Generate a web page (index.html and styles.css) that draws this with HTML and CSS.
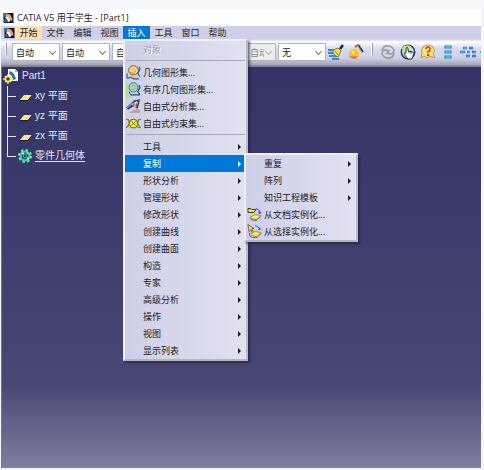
FILE: index.html
```html
<!DOCTYPE html>
<html lang="zh-CN">
<head>
<meta charset="utf-8">
<title>CATIA V5 用于学生 - [Part1]</title>
<link rel="stylesheet" href="styles.css">
</head>
<body>
<svg class="defs" aria-hidden="true">
  <symbol id="logo" viewBox="0 0 12 12">
    <rect width="12" height="12" fill="#10142c"/>
    <path d="M0 0h5L1 5H0z" fill="#2c6fb0"/>
    <path d="M4 1c5 0 6 4 7 8L8 9C8 6 6 4 2 4z" fill="#f2a25c"/>
    <path d="M3 4c3 0 5 2 5 6l-3 1C5 8 4 7 2 6z" fill="#fff3df"/>
    <path d="M1 7c3 0 3 2 3 4H1z" fill="#2d6ca8"/>
  </symbol>
  <symbol id="plane" viewBox="0 0 14 8">
    <path d="M5 1h8L9 6H1z" fill="#ffe680"/>
    <path d="M1 6h8l4-5v1L9 7H1z" fill="#1c1c30"/>
  </symbol>
  <symbol id="geoset" viewBox="0 0 14 14">
    <ellipse cx="7" cy="5" rx="4.6" ry="4.2" fill="#ffd98a" stroke="#6b4a14" stroke-width=".8"/>
    <path d="M4 4q1-2 3 0t3-1" fill="none" stroke="#e8a04f" stroke-width=".8"/>
    <path d="M4 7q3 2 5-1" fill="none" stroke="#d8603f" stroke-width=".8"/>
    <path d="M1 8v4q2 1 3-1l3 2h5M12 2q2 1 0 4l-1 2 2 3" fill="none" stroke="#1f5e96" stroke-width="1.1"/>
    <path d="M4 10l3 1h4" stroke="#f0c060" fill="none"/>
  </symbol>
  <symbol id="ordset" viewBox="0 0 14 14">
    <path d="M1 1v12h3" fill="none" stroke="#8fff1a" stroke-width="1.4"/>
    <ellipse cx="7" cy="5" rx="4.2" ry="4.4" fill="#a6d8b0" stroke="#2f6a72" stroke-width=".8"/>
    <path d="M5 4q2-1 4 0M5 7q2 1 4-1" fill="none" stroke="#7fbf8a" stroke-width=".8"/>
    <path d="M3 9q1 4 4 3h6M12 3q2 2 0 4l-1 2 2 3" fill="none" stroke="#1f4e86" stroke-width="1.1"/>
  </symbol>
  <symbol id="analysis" viewBox="0 0 14 14">
    <path d="M4 12l6-3 3 1v3H3z" fill="#aaa"/>
    <path d="M0 8l8-7 5 0-2 8-4-2-5 3z" fill="#24506e"/>
    <path d="M5 5l5-3 1 2-2 4z" fill="#fff"/>
    <path d="M6 7l2-3M9 7l1-3M11 1l2-1" stroke="#d83a2e" stroke-width="1.4"/>
    <path d="M1 8l5-4" stroke="#60c5d8"/>
  </symbol>
  <symbol id="constraint" viewBox="0 0 14 14">
    <path d="M4 4l3-1 3 1 1 4-2 3H5L3 8z" fill="#f6ee3c" stroke="#5c5800" stroke-width=".9"/>
    <path d="M0 3l3 1M0 11l3-2M14 3l-3 1M14 11l-4-1M2 3l1 4-2 3M12 3l-1 4 2 3M5 5l4 4M9 5L5 9" fill="none" stroke="#77700a" stroke-width=".9"/>
  </symbol>
  <symbol id="docinst" viewBox="0 0 15 14">
    <path d="M1 1h3l1 1h4L7 5H1z" fill="#e5df55" stroke="#33330a" stroke-width=".9"/>
    <path d="M9 1q4 1 4 5M13 6l-2-1M13 6l1-2" fill="none" stroke="#3344ee" stroke-width=".9"/>
    <path d="M3 10l5-3 6 1-4 4-6-1z" fill="#fff02c" stroke="#7d7730" stroke-width=".7"/>
    <path d="M3 11q1 2 6 2l5-4" fill="none" stroke="#3c48bb" stroke-width=".8"/>
  </symbol>
  <symbol id="selinst" viewBox="0 0 15 14">
    <path d="M1 0l1 7 2-2 1 3 1-1-1-3h2z" fill="#f8d790" stroke="#443c20" stroke-width=".7"/>
    <path d="M8 1q4 1 5 4M13 5l-2 0M13 5l0-2" fill="none" stroke="#3344ee" stroke-width=".9"/>
    <path d="M4 9l4-2 6 1-4 4-6-1z" fill="#fff02c" stroke="#7d7730" stroke-width=".7"/>
    <path d="M2 8q0 4 3 5h5l4-4" fill="none" stroke="#3c48bb" stroke-width=".8"/>
  </symbol>
</svg>

<main class="window">
  <header class="titlebar">
    <svg class="logo"><use href="#logo"/></svg>
    <h1>CATIA V5 用于学生 - [Part1]</h1>
  </header>

  <nav class="menubar">
    <svg class="logo"><use href="#logo"/></svg>
    <button class="start">开始</button>
    <button>文件</button>
    <button>编辑</button>
    <button>视图</button>
    <div class="dropdown">
      <button class="open">插入</button>
      <div class="menu insert">
        <button class="item" disabled>对象</button>
        <hr>
        <button class="item"><svg><use href="#geoset"/></svg>几何图形集...</button>
        <button class="item"><svg><use href="#ordset"/></svg>有序几何图形集...</button>
        <button class="item"><svg><use href="#analysis"/></svg>自由式分析集...</button>
        <button class="item"><svg><use href="#constraint"/></svg>自由式约束集...</button>
        <hr>
        <button class="item more">工具</button>
        <div class="branch">
          <button class="item more current">复制</button>
          <div class="menu copy">
            <button class="item more">重复</button>
            <button class="item more">阵列</button>
            <button class="item more">知识工程模板</button>
            <button class="item"><svg><use href="#docinst"/></svg>从文档实例化...</button>
            <button class="item"><svg><use href="#selinst"/></svg>从选择实例化...</button>
          </div>
        </div>
        <button class="item more">形状分析</button>
        <button class="item more">管理形状</button>
        <button class="item more">修改形状</button>
        <button class="item more">创建曲线</button>
        <button class="item more">创建曲面</button>
        <button class="item more">构造</button>
        <button class="item more">专家</button>
        <button class="item more">高级分析</button>
        <button class="item more">操作</button>
        <button class="item more">视图</button>
        <button class="item more">显示列表</button>
      </div>
    </div>
    <button>工具</button>
    <button>窗口</button>
    <button>帮助</button>
  </nav>

  <div class="toolbar">
    <span class="grip"></span>
    <label class="combo"><select aria-label="颜色"><option>自动</option></select></label>
    <label class="combo"><select aria-label="透明度"><option>自动</option></select></label>
    <label class="combo wide"><select aria-label="线宽"><option>自动</option></select></label>
    <label class="combo off"><select aria-label="点符号" disabled><option>自动</option></select></label>
    <label class="combo"><select aria-label="图层"><option>无</option></select></label>
    <div class="tools">
      <button aria-label="格式刷"><svg viewBox="0 0 16 16">
        <path d="M0 6h8M0 9h8M1 12h9M4 15h7" stroke="#2b86ee" stroke-width="1.8"/>
        <path d="M5 6l5-2 3 3-3 6q-2 0-5-4z" fill="#eee05c" stroke="#6b6420" stroke-width=".8"/>
        <path d="M7 7l3 4" stroke="#6b6420" stroke-width=".7"/>
        <path d="M12 5l3-4" stroke="#18255c" stroke-width="2.6"/></svg></button>
      <button aria-label="图形属性"><svg viewBox="0 0 16 16">
        <circle cx="6" cy="10" r="5" fill="#f9c51e"/><path d="M1 12q5 6 9 0-4 1-9 0" fill="#e552b8"/><circle cx="5" cy="8" r="1.5" fill="#fff17a"/>
        <path d="M7 3l3-2 2 1" fill="none" stroke="#c3472f" stroke-width="1.6"/><path d="M11 2l4 6" stroke="#233c88" stroke-width="1.8"/><path d="M10 3l4 6" stroke="#e08a6a"/></svg></button>
      <span class="grip"></span>
      <button aria-label="更新"><svg viewBox="0 0 16 16" fill="none" stroke="#9b9ba3" stroke-width="1.6">
        <path d="M2 7Q3 1 9 2q4 1 5 4 0 4-4 4-3-1-2-3 1-1 2 0"/><path d="M14 9q-1 6-7 5-4-1-5-4 0-4 4-4 3 1 2 3-1 1-2 0"/></svg></button>
      <button aria-label="手动更新"><svg viewBox="0 0 16 16">
        <circle cx="8" cy="8" r="6.7" fill="#c3e3d7" stroke="#173a5c" stroke-width="1.4"/>
        <path d="M2 5q4-5 9-2" fill="none" stroke="#eee45b" stroke-width="1.4"/>
        <path d="M6 4q1-1 2 0v3l5 1q1 1 0 4l-1 3H8L4 10q0-2 2-1z" fill="#fff" stroke="#222" stroke-width=".9"/><path d="M9 7v2M11 8v2" stroke="#222" stroke-width=".8"/></svg></button>
      <button aria-label="这是什么？"><svg viewBox="0 0 16 16">
        <path d="M3 3q5-4 10 0 3 4 0 7l2 4-5-2-3 2-3-2-3 2 1-5q-1-3 1-6z" fill="#ffe174" stroke="#a38e45" stroke-width=".8"/>
        <path d="M6 5q0-2 2-2t2 2-2 3v1" fill="none" stroke="#d93520" stroke-width="1.5"/><path d="M7 10h2v2H7z" fill="#d93520"/></svg></button>
      <button aria-label="目录"><svg viewBox="0 0 16 16" fill="#44e4e4" stroke="#3978ea" stroke-width="1.2">
        <path d="M5 2h6v2H5zM5 7h6v2H5zM5 12h6v2H5z"/><path d="M6 3h4M6 8h4M6 13h4" stroke="#38d7a4"/></svg></button>
      <button aria-label="设计表"><svg viewBox="0 0 16 16" stroke-width="2.4">
        <path d="M3 4h4M9 4h4M0 8h5M7 8h3M12 8h4M6 12h4M12 12h4" stroke="#4674e8"/><path d="M4 4h3M1 8h3M8 8h2M13 9h3M7 13h3" stroke="#44dcbd" stroke-width="1"/></svg></button>
      <span class="cut"></span>
    </div>
  </div>

  <section class="canvas">
    <ul class="tree">
      <li class="root"><svg viewBox="0 0 16 16">
        <path d="M5 1h7l3 3v9H5z" fill="#fff"/><path d="M7 3q4 1 6 8l-3 1Q9 7 6 6z" fill="#247a9e"/><path d="M12 1v3h3z" fill="#8bd3e4"/>
        <circle cx="5" cy="11" r="2.6" fill="#4a431c" stroke="#ffe36a" stroke-width="1.6"/>
        <path d="M5 6v2M5 14v2M0 11h2M8 11h2M2 8l1 1M7 13l1 1M2 14l1-1M7 9l1-1" stroke="#ffe36a" stroke-width="1.4"/></svg>Part1</li>
      <li><svg><use href="#plane"/></svg>xy 平面</li>
      <li><svg><use href="#plane"/></svg>yz 平面</li>
      <li><svg><use href="#plane"/></svg>zx 平面</li>
      <li class="body"><svg viewBox="0 0 14 14">
        <circle cx="7" cy="7" r="4.4" fill="#174f68" stroke="#3bc8c0" stroke-width="2.2"/>
        <circle cx="7" cy="7" r="6" fill="none" stroke="#6fe9a4" stroke-width="2" stroke-dasharray="2.4 2.3"/>
        <circle cx="7" cy="7" r="1.7" fill="#132b48" stroke="#3cbcc8"/><path d="M4 4l2 1M9 9l2 1M9 4l1 1" stroke="#f6ef4c" stroke-width="1.4"/></svg><a href="#body">零件几何体</a></li>
    </ul>
  </section>
</main>
</body>
</html>
```
FILE: styles.css
```css
* {
  box-sizing: border-box;
}

body {
  margin: 0;
  height: 100vh;
  padding: 9px 3px 2px 1px;
  background: #f4f6fa;
  color: #1c1c24;
  font: 9px/17px "Open Sans", "Noto Sans CJK SC", sans-serif;
  overflow: hidden;
}

button,
select {
  margin: 0;
  padding: 0;
  border: 0;
  background: none;
  color: inherit;
  font: inherit;
}

.defs {
  position: absolute;
  width: 0;
  height: 0;
}

.window {
  display: flex;
  flex-direction: column;
  height: 100%;
}

.logo {
  flex: none;
  width: 11px;
  height: 10px;
}

/* Title and menu bar */
.titlebar {
  display: flex;
  align-items: center;
  gap: 3px;
  height: 17px;
  padding-left: 2px;
  background: #fff;
}

.titlebar h1 {
  margin: 0;
  font-size: 9px;
  font-weight: 400;
}

.menubar {
  display: flex;
  align-items: center;
  height: 13px;
  padding-left: 3px;
  background: #cfcfe7;
  line-height: 13px;
}

.menubar > button,
.dropdown > button {
  width: 27px;
  height: 13px;
}

.menubar > .start {
  background: #fee0b5;
}

.dropdown,
.branch {
  position: relative;
}

.dropdown > .open {
  background: #0078d7;
  color: #fff;
}

/* Pop-up menus */
.menu {
  position: absolute;
  z-index: 2;
  border: 2px solid #eeeef4;
  border-right-color: #b9bcc2;
  border-bottom-color: #b2b7b8;
  background: linear-gradient(90deg, #cfcfe8, #e1e1f1);
  box-shadow: 2px 2px 2px #1c1c3c99;
  line-height: 17px;
}

.insert {
  top: 13px;
  left: 0;
  width: 125px;
}

.copy {
  top: -2px;
  left: 119px;
  width: 114px;
}

.menu hr {
  height: 1px;
  margin: 2px 1px 3px;
  border: 0;
  background: #a9a9b8;
}

.item {
  display: flex;
  align-items: center;
  position: relative;
  width: 100%;
  height: 17px;
  padding-left: 18px;
  text-align: left;
  white-space: nowrap;
}

.item:disabled {
  color: #a6a6b4;
  text-shadow: 1px 1px #fff;
}

.item svg {
  width: 15px;
  height: 15px;
  margin-left: -17px;
  margin-right: 2px;
}

.more::after {
  content: "";
  margin-left: auto;
  margin-right: 5px;
  border: 3px solid transparent;
  border-left-color: currentColor;
  border-right: 0;
}

.current {
  background: #0078d7;
  color: #fff;
}

/* Toolbar */
.toolbar {
  display: flex;
  align-items: center;
  gap: 2px;
  height: 28px;
  padding: 0 0 0 4px;
  border-bottom: 2px solid #85858f;
  background: linear-gradient(#cfcfe7 0, #fff 3px, #dcdcf0 9px, #cfcfe7 19px, #a3a3b8 26px);
  overflow: hidden;
}

.grip {
  flex: none;
  width: 2px;
  height: 12px;
  margin-bottom: 6px;
  border-right: 1px solid #9c9cae;
  background: #fff;
}

.combo {
  position: relative;
  flex: none;
  width: 48px;
  height: 18px;
  border: 1px solid #b4b4be;
  background: #fff;
}

.toolbar > .grip {
  margin-right: 3px;
}

.combo.wide {
  width: 132px;
}

.combo.off {
  width: 30px;
}

.combo select {
  width: 100%;
  height: 16px;
  padding-left: 3px;
  appearance: none;
  line-height: 16px;
}

.combo::after {
  content: "";
  position: absolute;
  top: 5px;
  right: 4px;
  width: 4px;
  height: 4px;
  border: solid #777;
  border-width: 0 1px 1px 0;
  transform: rotate(45deg);
}

.off {
  background: #ededf0;
  color: #888;
}

.combo.off select {
  width: 17px;
  opacity: 1;
}

.combo.off::after {
  border-color: #b4b4b4;
}

.tools {
  display: flex;
  flex: 1;
  align-items: center;
  gap: 4px;
}

.tools button,
.tools svg {
  display: block;
  flex: none;
  width: 16px;
  height: 16px;
}

.tools .grip {
  margin: 0 3px 6px;
}

.cut {
  flex: none;
  width: 3px;
  height: 2px;
  background: #36b9c4;
}

/* Model view */
.canvas {
  flex: 1;
  border-left: 1px solid #777789;
  background: linear-gradient(#333366, #474774 79%, #7f7fa0);
}

.tree {
  margin: -1px 0 0;
  padding: 0 0 0 5px;
  color: #e6e6f2;
  font: 10px/20px "Liberation Sans", "Noto Sans CJK SC", sans-serif;
  list-style: none;
}

.tree li {
  display: flex;
  align-items: center;
  position: relative;
  height: 20px;
}

.tree li:not(.root)::before {
  content: "";
  align-self: flex-start;
  width: 8px;
  height: 20px;
  border-left: 1px solid #e6e6f2;
  background: linear-gradient(#e6e6f2, #e6e6f2) 0 10px / 8px 1px no-repeat;
}

.tree li.body::before {
  height: 11px;
}

.tree svg {
  width: 14px;
  height: 8px;
  margin: 4px 2px 0 3px;
}

.tree .root svg {
  width: 16px;
  height: 16px;
  margin: 0 3px 0 -4px;
}

.tree .body svg {
  width: 14px;
  height: 14px;
  margin: 0 3px 0 2px;
}

.tree a {
  color: inherit;
  text-underline-offset: 2px;
}
```
